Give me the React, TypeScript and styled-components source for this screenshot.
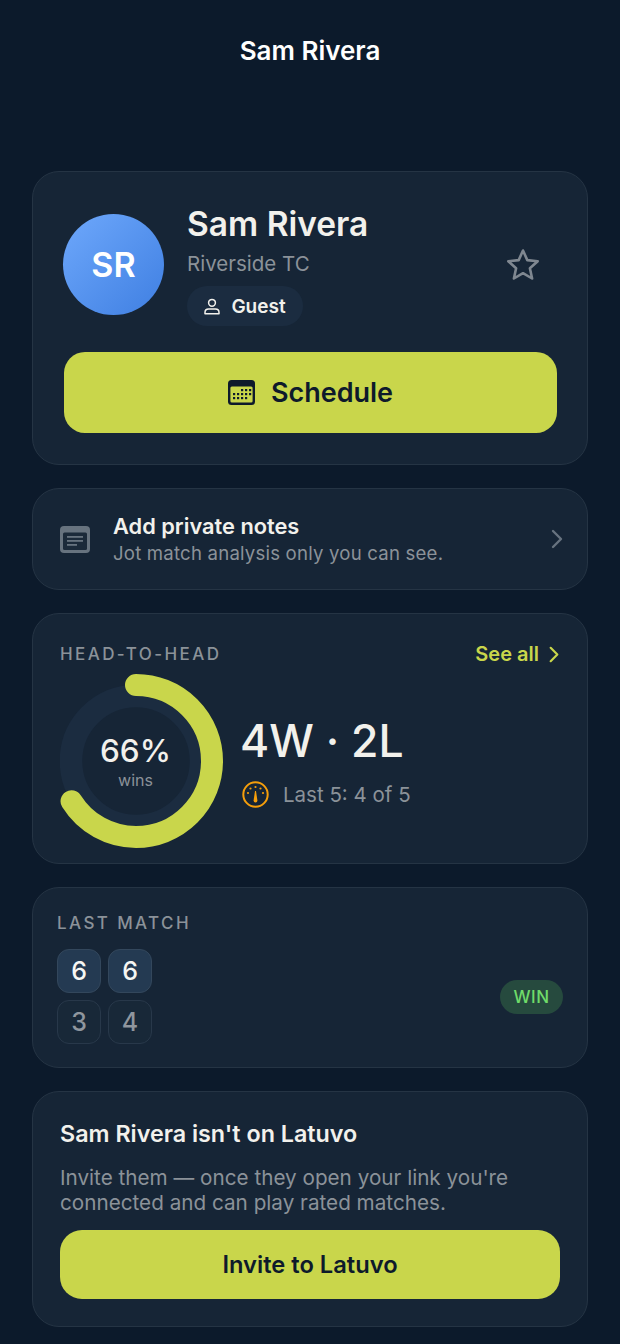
import React from 'react'
import styled, { createGlobalStyle } from 'styled-components'

const GlobalStyle = createGlobalStyle`
  html, body {
    margin: 0;
    padding: 0;
    background: #0c1a2b;
    font-family: Inter, "Noto Sans", sans-serif;
    -webkit-font-smoothing: antialiased;
  }
  * { box-sizing: border-box; }
`

const LIME = '#c9d64b'
const MUTED = '#8b9299'

const Page = styled.div`
  width: 620px;
  height: 1344px;
  overflow: hidden;
  background: #0c1a2b;
  padding: 0 32px;
  color: #f2f1ec;
`

const Title = styled.h1`
  margin: 0;
  height: 171px;
  padding-top: 34px;
  text-align: center;
  font-size: 26px;
  line-height: 34px;
  font-weight: 600;
  color: #ffffff;
`

const Stack = styled.div`
  display: flex;
  flex-direction: column;
  gap: 23px;
`

const Card = styled.section<{ $h: number }>`
  height: ${p => p.$h}px;
  background: #162536;
  border: 1.5px solid #253444;
  border-radius: 27px;
`

const ProfileCard = styled(Card)`
  padding: 4px 30px 0 30px;
`

const ProfileTop = styled.div`
  display: flex;
  align-items: center;
  height: 176px;
`

const Avatar = styled.div`
  width: 101px;
  height: 101px;
  border-radius: 50%;
  background: linear-gradient(135deg, #6ea8fb 0%, #3f7fe2 100%);
  display: flex;
  align-items: center;
  justify-content: center;
  font-size: 34px;
  font-weight: 600;
  color: #fff;
  flex: none;
`

const ProfileInfo = styled.div`
  margin: 2px 0 0 23px;
  flex: 1;
  display: flex;
  flex-direction: column;
  align-items: flex-start;
`

const Name = styled.div`
  font-size: 33.5px;
  line-height: 40px;
  font-weight: 600;
`

const Club = styled.div`
  font-size: 20.5px;
  line-height: 26px;
  margin-top: 7px;
  color: ${MUTED};
`

const Pill = styled.div`
  margin-top: 9px;
  height: 40px;
  width: 116px;
  border-radius: 20px;
  background: #1b2c40;
  display: flex;
  align-items: center;
  justify-content: center;
  gap: 11px;
  font-size: 19px;
  font-weight: 600;
`

const StarButton = styled.div`
  margin-right: 17px;
  display: flex;
`

const PrimaryButton = styled.div<{ $h: number; $size: number; $r: number }>`
  height: ${p => p.$h}px;
  border-radius: ${p => p.$r}px;
  background: ${LIME};
  color: #0e1a2b;
  font-size: ${p => p.$size}px;
  font-weight: 600;
  display: flex;
  align-items: center;
  justify-content: center;
  gap: 16px;
`

const ScheduleButton = styled(PrimaryButton)`
  margin-left: 1px;
`

const NotesCard = styled(Card)`
  padding: 0 24px 0 27px;
  display: flex;
  align-items: center;
`

const NotesText = styled.div`
  flex: 1;
  margin-left: 23px;
`

const NotesTitle = styled.div`
  font-size: 21.8px;
  line-height: 28px;
  font-weight: 600;
`

const NotesSub = styled.div`
  font-size: 18.6px;
  line-height: 26px;
  color: ${MUTED};
  letter-spacing: 0.2px;
`

const H2HCard = styled(Card)`
  padding: 25px 28px 0 27px;
`

const SectionHead = styled.div`
  display: flex;
  align-items: center;
  justify-content: space-between;
  height: 30px;
`

const Label = styled.div`
  font-size: 17px;
  font-weight: 500;
  letter-spacing: 2.4px;
  color: ${MUTED};
`

const SeeAll = styled.div`
  display: flex;
  align-items: center;
  gap: 10px;
  font-size: 20px;
  font-weight: 600;
  color: ${LIME};
`

const H2HBody = styled.div`
  display: flex;
  margin-top: 5px;
`

const Ring = styled.div`
  position: relative;
  width: 163px;
  height: 174px;
  flex: none;
  svg { display: block; }
`

const RingLabel = styled.div`
  position: absolute;
  left: 0;
  top: 1px;
  width: 151px;
  height: 174px;
  display: flex;
  flex-direction: column;
  align-items: center;
  justify-content: center;
`

const RingPct = styled.div`
  font-size: 31.5px;
  line-height: 36px;
  font-weight: 500;
`

const RingSub = styled.div`
  font-size: 16px;
  line-height: 22px;
  color: ${MUTED};
`

const H2HStats = styled.div`
  margin-left: 18px;
  padding-top: 37px;
`

const Record = styled.div`
  font-size: 44.5px;
  line-height: 60px;
  font-weight: 500;
  margin-left: -1px;
`

const Form = styled.div`
  margin-top: 10px;
  display: flex;
  align-items: center;
  gap: 14px;
  font-size: 20.5px;
  color: ${MUTED};
  padding-left: 1px;
`

const MatchCard = styled(Card)`
  padding: 25px 24px 0 24px;
  display: flex;
  align-items: flex-start;
  justify-content: space-between;
`

const Sets = styled.div`
  margin-top: 16px;
  display: grid;
  grid-template-columns: 44px 44px;
  grid-auto-rows: 44px;
  gap: 7px;
`

const SetBox = styled.div<{ $won?: boolean }>`
  border-radius: 12px;
  display: flex;
  align-items: center;
  justify-content: center;
  font-size: 25px;
  font-weight: 500;
  background: ${p => (p.$won ? '#243a52' : '#182838')};
  border: 1.5px solid ${p => (p.$won ? '#33475c' : '#28384a')};
  color: ${p => (p.$won ? '#f6f6f2' : '#8f969e')};
`

const Result = styled.div`
  margin-top: 67px;
  width: 63px;
  height: 34px;
  border-radius: 17px;
  background: #264a3e;
  color: #6fdc6a;
  font-size: 17px;
  font-weight: 500;
  letter-spacing: 0.5px;
  display: flex;
  align-items: center;
  justify-content: center;
`

const InviteCard = styled(Card)`
  padding: 25px 27px 0 27px;
`

const InviteTitle = styled.div`
  font-size: 23.3px;
  line-height: 34px;
  font-weight: 600;
`

const InviteText = styled.p`
  margin: 14px 0 15px;
  font-size: 20.7px;
  line-height: 25px;
  color: ${MUTED};
`

const StarIcon = () => (
  <svg width="34" height="33" viewBox="0 0 34 33" fill="none" stroke="#7f8790" strokeWidth="2.6" strokeLinejoin="round">
    <path d="M17 2.5l4.3 9.6 10.4 1.1-7.8 7 2.2 10.3L17 25.2l-9.1 5.3 2.2-10.3-7.8-7 10.4-1.1z" />
  </svg>
)

const PersonIcon = () => (
  <svg width="16" height="17" viewBox="0 0 16 17" fill="none" stroke="#f2f1ec" strokeWidth="1.5">
    <circle cx="8" cy="4.8" r="3.4" />
    <path d="M1 15.8v-1.3c0-2 1.6-3.4 3.6-3.4h6.8c2 0 3.6 1.4 3.6 3.4v1.3z" strokeLinejoin="round" />
  </svg>
)

const CalendarIcon = () => (
  <svg width="27" height="25" viewBox="0 0 27 25">
    <rect x="0" y="0" width="27" height="25" rx="3.5" fill="#0e1a2b" />
    <rect x="2.4" y="6.4" width="22.2" height="16.2" rx="1.5" fill={LIME} />
    {[
      [13, 9], [17, 9], [21, 9],
      [5, 13], [9, 13], [13, 13], [17, 13], [21, 13],
      [5, 17], [9, 17], [13, 17], [17, 17],
    ].map(([x, y]) => (
      <rect key={`${x}-${y}`} x={x} y={y} width="2.2" height="2.2" fill="#0e1a2b" />
    ))}
  </svg>
)

const NotesIcon = () => (
  <svg width="30" height="27" viewBox="0 0 30 27">
    <rect x="0" y="0" width="30" height="27" rx="4" fill="#67737f" />
    <rect x="3" y="6.5" width="24" height="17.5" rx="1.5" fill="#1b2a3a" />
    <rect x="7" y="10" width="16" height="1.8" fill="#67737f" />
    <rect x="7" y="14" width="16" height="1.8" fill="#67737f" />
    <rect x="7" y="18" width="10" height="1.8" fill="#67737f" />
  </svg>
)

const Chevron = ({ color, w, h, sw }: { color: string; w: number; h: number; sw: number }) => (
  <svg width={w} height={h} viewBox="0 0 12 20" fill="none" stroke={color} strokeWidth={sw} strokeLinecap="round" strokeLinejoin="round">
    <path d="M2 2l8 8-8 8" />
  </svg>
)

const GaugeIcon = () => (
  <svg width="27" height="27" viewBox="0 0 27 27" fill="none" stroke="#f59e0b">
    <circle cx="13.5" cy="13.5" r="12.2" strokeWidth="2" />
    <g fill="#f59e0b" stroke="none">
      <circle cx="6" cy="12" r="1.1" />
      <circle cx="8.5" cy="7.5" r="1.1" />
      <circle cx="13.5" cy="6" r="1.1" />
      <circle cx="18.5" cy="7.5" r="1.1" />
      <circle cx="21" cy="12" r="1.1" />
      <path d="M13 10h1l1.4 9.6a1.9 1.9 0 0 1-3.8 0z" />
    </g>
  </svg>
)

const pct = 66
const RING_R = 76
const circumference = 2 * Math.PI * RING_R

export default function App() {
  return (
    <>
      <GlobalStyle />
      <Page>
        <Title>Sam Rivera</Title>
        <Stack>
          <ProfileCard $h={294}>
            <ProfileTop>
              <Avatar>SR</Avatar>
              <ProfileInfo>
                <Name>Sam Rivera</Name>
                <Club>Riverside TC</Club>
                <Pill>
                  <PersonIcon />
                  Guest
                </Pill>
              </ProfileInfo>
              <StarButton>
                <StarIcon />
              </StarButton>
            </ProfileTop>
            <ScheduleButton $h={81} $size={27} $r={21}>
              <CalendarIcon />
              Schedule
            </ScheduleButton>
          </ProfileCard>

          <NotesCard $h={102}>
            <NotesIcon />
            <NotesText>
              <NotesTitle>Add private notes</NotesTitle>
              <NotesSub>Jot match analysis only you can see.</NotesSub>
            </NotesText>
            <Chevron color="#67737f" w={12} h={20} sw={2.4} />
          </NotesCard>

          <H2HCard $h={251}>
            <SectionHead>
              <Label>HEAD-TO-HEAD</Label>
              <SeeAll>
                See all
                <Chevron color={LIME} w={10} h={17} sw={2.6} />
              </SeeAll>
            </SectionHead>
            <H2HBody>
              <Ring>
                <svg width="163" height="174" viewBox="11 0 163 174" fill="none">
                  <circle cx="87" cy="87" r="65" stroke="#1b2c40" strokeWidth="22.5" />
                  <circle
                    cx="87"
                    cy="87"
                    r={RING_R}
                    stroke={LIME}
                    strokeWidth="22"
                    strokeLinecap="round"
                    strokeDasharray={`${(circumference * pct) / 100} ${circumference}`}
                    transform="rotate(-90 87 87)"
                  />
                </svg>
                <RingLabel>
                  <RingPct>66%</RingPct>
                  <RingSub>wins</RingSub>
                </RingLabel>
              </Ring>
              <H2HStats>
                <Record>4W · 2L</Record>
                <Form>
                  <GaugeIcon />
                  Last 5: 4 of 5
                </Form>
              </H2HStats>
            </H2HBody>
          </H2HCard>

          <MatchCard $h={181}>
            <div>
              <Label>LAST MATCH</Label>
              <Sets>
                <SetBox $won>6</SetBox>
                <SetBox $won>6</SetBox>
                <SetBox>3</SetBox>
                <SetBox>4</SetBox>
              </Sets>
            </div>
            <Result>WIN</Result>
          </MatchCard>

          <InviteCard $h={236}>
            <InviteTitle>Sam Rivera isn't on Latuvo</InviteTitle>
            <InviteText>
              Invite them — once they open your link you're connected and can play rated matches.
            </InviteText>
            <PrimaryButton $h={69} $size={23.7} $r={22}>
              Invite to Latuvo
            </PrimaryButton>
          </InviteCard>
        </Stack>
      </Page>
    </>
  )
}
